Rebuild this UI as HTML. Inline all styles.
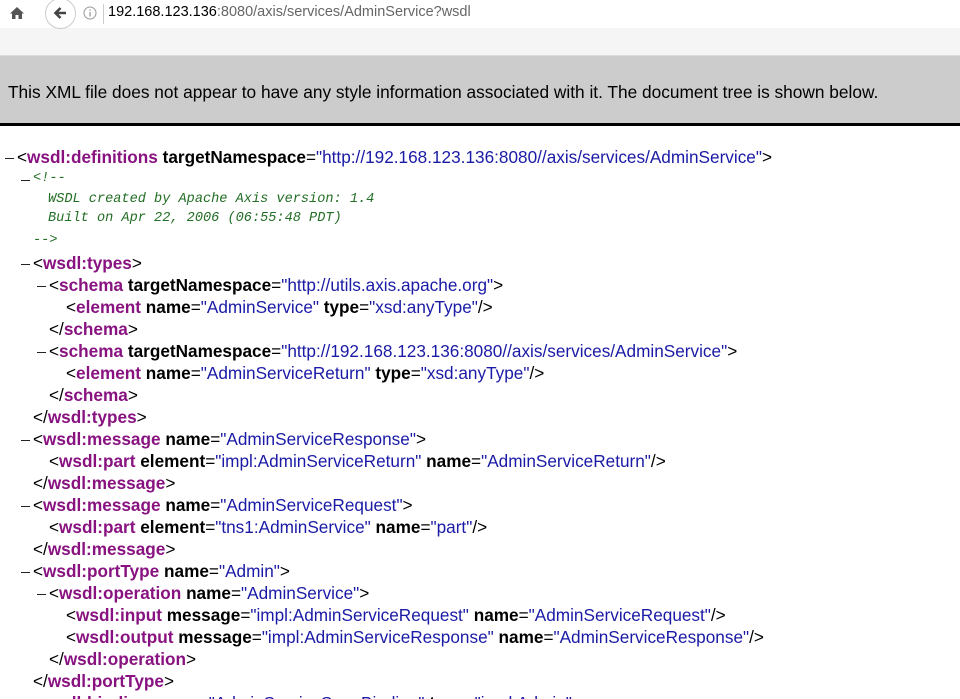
<!DOCTYPE html>
<html><head><meta charset="utf-8"><style>
*{margin:0;padding:0;box-sizing:border-box}
html,body{width:960px;height:699px;overflow:hidden}
body{background:#fff;font-family:"Liberation Sans",sans-serif;position:relative}
#bar{position:absolute;left:0;top:0;width:960px;height:28px;background:#fff}
#bar2{position:absolute;left:0;top:28px;width:960px;height:28px;background:#f5f5f5;border-bottom:1px solid #ddd}
#info{position:absolute;left:0;top:56px;width:960px;height:70px;background:#cccccc;border-bottom:3px solid #000}
#info div{position:absolute;left:8px;top:26px;font-size:17.3px;color:#000}
.l{position:absolute;height:22px;line-height:22px;font-size:17.2px;white-space:nowrap;color:#000}
.t{color:#881280;font-weight:bold}
.a{font-weight:bold}
.v{color:#1a1aa6}
.c{font-family:"Liberation Mono",monospace;font-style:italic;color:#236e25;font-size:13.6px}
.m{position:absolute;width:9px;height:1px;background:#222}
</style></head><body>
<div id="bar"></div>
<div id="bar2"></div>
<svg style="position:absolute;left:9px;top:6px" width="16" height="14" viewBox="0 0 16 14"><path d="M8 1 L1 7.5 H3 V13 H6.5 V9 H9.5 V13 H13 V7.5 H15 Z" fill="#555"/></svg>
<div style="position:absolute;left:45px;top:-2px;width:31px;height:31px;border:1px solid #ccc;border-radius:50%;background:#fff"></div>
<svg style="position:absolute;left:52px;top:5px" width="16" height="16" viewBox="0 0 16 16"><path d="M14 8 H4 M8.5 3 L3.5 8 L8.5 13" stroke="#444" stroke-width="2.6" fill="none"/></svg>
<svg style="position:absolute;left:83px;top:6px" width="14" height="14" viewBox="0 0 14 14"><circle cx="7" cy="7" r="6" stroke="#999" fill="none"/><rect x="6.4" y="6" width="1.3" height="4.5" fill="#999"/><rect x="6.4" y="3.5" width="1.3" height="1.3" fill="#999"/></svg>
<div style="position:absolute;left:103px;top:4px;width:1px;height:20px;background:#ccc"></div>
<div style="position:absolute;left:108px;top:4px;font-size:14.5px;color:#000">192.168.123.136<span style="color:#666">:8080/axis/services/AdminService?wsdl</span></div>
<div id="info"><div>This XML file does not appear to have any style information associated with it. The document tree is shown below.</div></div>

<div class="m" style="left:5px;top:158px"></div>
<div class="l" style="left:17px;top:146px">&lt;<span class="t">wsdl:definitions</span> <span class="a">targetNamespace</span>=<span class="v">"http://192.168.123.136:8080//axis/services/AdminService"</span>&gt;</div>
<div class="m" style="left:21px;top:180px"></div>
<div class="l c" style="left:33px;top:168px">&lt;!--</div>
<div class="l c" style="left:48px;top:189px">WSDL created by Apache Axis version: 1.4</div>
<div class="l c" style="left:48px;top:208px">Built on Apr 22, 2006 (06:55:48 PDT)</div>
<div class="l c" style="left:33px;top:230px">--&gt;</div>
<div class="m" style="left:21px;top:264px"></div>
<div class="l" style="left:33px;top:252px">&lt;<span class="t">wsdl:types</span>&gt;</div>
<div class="m" style="left:37px;top:286px"></div>
<div class="l" style="left:49px;top:274px">&lt;<span class="t">schema</span> <span class="a">targetNamespace</span>=<span class="v">"http://utils.axis.apache.org"</span>&gt;</div>
<div class="l" style="left:66px;top:296px">&lt;<span class="t">element</span> <span class="a">name</span>=<span class="v">"AdminService"</span> <span class="a">type</span>=<span class="v">"xsd:anyType"</span>/&gt;</div>
<div class="l" style="left:49px;top:318px">&lt;/<span class="t">schema</span>&gt;</div>
<div class="m" style="left:37px;top:352px"></div>
<div class="l" style="left:49px;top:340px">&lt;<span class="t">schema</span> <span class="a">targetNamespace</span>=<span class="v">"http://192.168.123.136:8080//axis/services/AdminService"</span>&gt;</div>
<div class="l" style="left:66px;top:362px">&lt;<span class="t">element</span> <span class="a">name</span>=<span class="v">"AdminServiceReturn"</span> <span class="a">type</span>=<span class="v">"xsd:anyType"</span>/&gt;</div>
<div class="l" style="left:49px;top:384px">&lt;/<span class="t">schema</span>&gt;</div>
<div class="l" style="left:33px;top:406px">&lt;/<span class="t">wsdl:types</span>&gt;</div>
<div class="m" style="left:21px;top:440px"></div>
<div class="l" style="left:33px;top:428px">&lt;<span class="t">wsdl:message</span> <span class="a">name</span>=<span class="v">"AdminServiceResponse"</span>&gt;</div>
<div class="l" style="left:49px;top:450px">&lt;<span class="t">wsdl:part</span> <span class="a">element</span>=<span class="v">"impl:AdminServiceReturn"</span> <span class="a">name</span>=<span class="v">"AdminServiceReturn"</span>/&gt;</div>
<div class="l" style="left:33px;top:472px">&lt;/<span class="t">wsdl:message</span>&gt;</div>
<div class="m" style="left:21px;top:506px"></div>
<div class="l" style="left:33px;top:494px">&lt;<span class="t">wsdl:message</span> <span class="a">name</span>=<span class="v">"AdminServiceRequest"</span>&gt;</div>
<div class="l" style="left:49px;top:516px">&lt;<span class="t">wsdl:part</span> <span class="a">element</span>=<span class="v">"tns1:AdminService"</span> <span class="a">name</span>=<span class="v">"part"</span>/&gt;</div>
<div class="l" style="left:33px;top:538px">&lt;/<span class="t">wsdl:message</span>&gt;</div>
<div class="m" style="left:21px;top:572px"></div>
<div class="l" style="left:33px;top:560px">&lt;<span class="t">wsdl:portType</span> <span class="a">name</span>=<span class="v">"Admin"</span>&gt;</div>
<div class="m" style="left:37px;top:594px"></div>
<div class="l" style="left:49px;top:582px">&lt;<span class="t">wsdl:operation</span> <span class="a">name</span>=<span class="v">"AdminService"</span>&gt;</div>
<div class="l" style="left:66px;top:604px">&lt;<span class="t">wsdl:input</span> <span class="a">message</span>=<span class="v">"impl:AdminServiceRequest"</span> <span class="a">name</span>=<span class="v">"AdminServiceRequest"</span>/&gt;</div>
<div class="l" style="left:66px;top:626px">&lt;<span class="t">wsdl:output</span> <span class="a">message</span>=<span class="v">"impl:AdminServiceResponse"</span> <span class="a">name</span>=<span class="v">"AdminServiceResponse"</span>/&gt;</div>
<div class="l" style="left:49px;top:648px">&lt;/<span class="t">wsdl:operation</span>&gt;</div>
<div class="l" style="left:33px;top:670px">&lt;/<span class="t">wsdl:portType</span>&gt;</div>
<div class="m" style="left:21px;top:704px"></div>
<div class="l" style="left:33px;top:692px">&lt;<span class="t">wsdl:binding</span> <span class="a">name</span>=<span class="v">"AdminServiceSoapBinding"</span> <span class="a">type</span>=<span class="v">"impl:Admin"</span>&gt;</div>
</body></html>
